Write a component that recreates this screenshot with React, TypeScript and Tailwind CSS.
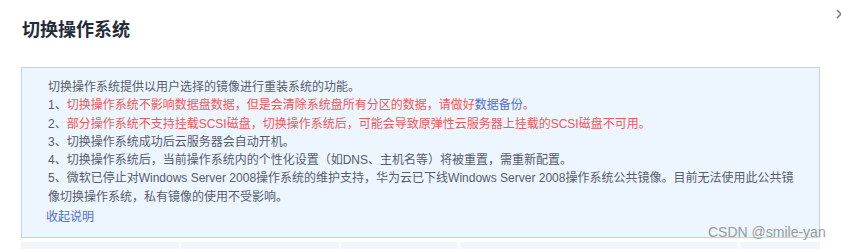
import React from "react";

const font = { fontFamily: '"Liberation Sans", "Noto Sans CJK SC", Arial, sans-serif' };

export default function App() {
  return (
    <div className="relative w-[841px] h-[249px] overflow-hidden bg-white" style={font}>
      <div className="absolute left-[836px] top-[9px] w-[10px] h-[10px]">
        <svg width="10" height="10" viewBox="0 0 10 10">
          <path d="M1 1 L9 9 M9 1 L1 9" stroke="#6e7480" strokeWidth="1.3" />
        </svg>
      </div>
      <div className="pl-[22px] pt-[18px] h-[42px] text-[18px] leading-[24px] font-bold text-[#252b3a]">
        切换操作系统
      </div>
      <div className="ml-[21px] mt-[25px] w-[799px] border border-[#c0d3f6] bg-[#edf5ff] pt-[10px] pb-[11px] pl-[26px] pr-[20px] text-[12px] leading-[18.3px] text-[#575d6c]">
        <div>切换操作系统提供以用户选择的镜像进行重装系统的功能。</div>
        <div>
          1、<span className="text-[#f0585a]">切换操作系统不影响数据盘数据，但是会清除系统盘所有分区的数据，请做好</span>
          <span className="text-[#526ecc]">数据备份</span>
          <span className="text-[#f0585a]">。</span>
        </div>
        <div>
          2、<span className="text-[#f0585a]">部分操作系统不支持挂载SCSI磁盘，切换操作系统后，可能会导致原弹性云服务器上挂载的SCSI磁盘不可用。</span>
        </div>
        <div>3、切换操作系统成功后云服务器会自动开机。</div>
        <div>4、切换操作系统后，当前操作系统内的个性化设置（如DNS、主机名等）将被重置，需重新配置。</div>
        <div>
          5、微软已停止对Windows Server 2008操作系统的维护支持，华为云已下线Windows Server 2008操作系统公共镜像。目前无法使用此公共镜像切换操作系统，私有镜像的使用不受影响。
        </div>
        <div className="mt-[2px] -ml-[2px] leading-[18px] text-[#526ecc]">收起说明</div>
      </div>
      <div className="ml-[21px] mt-[4px] w-[799px] flex gap-[2px] h-[10px]">
        <div className="w-[158px] bg-[#f2f5fc]" />
        <div className="w-[158px] bg-[#f2f5fc]" />
        <div className="w-[117px] bg-[#f2f5fc]" />
        <div className="w-[278px] bg-[#f2f5fc]" />
        <div className="flex-1 bg-[#f2f5fc]" />
      </div>
      <div className="absolute left-[708px] top-[223px] text-[14px] leading-[18px] text-[#9a9a9a] whitespace-nowrap" style={{ fontFamily: '"Liberation Sans", Arial, sans-serif' }}>
        CSDN @smile-yan
      </div>
    </div>
  );
}
